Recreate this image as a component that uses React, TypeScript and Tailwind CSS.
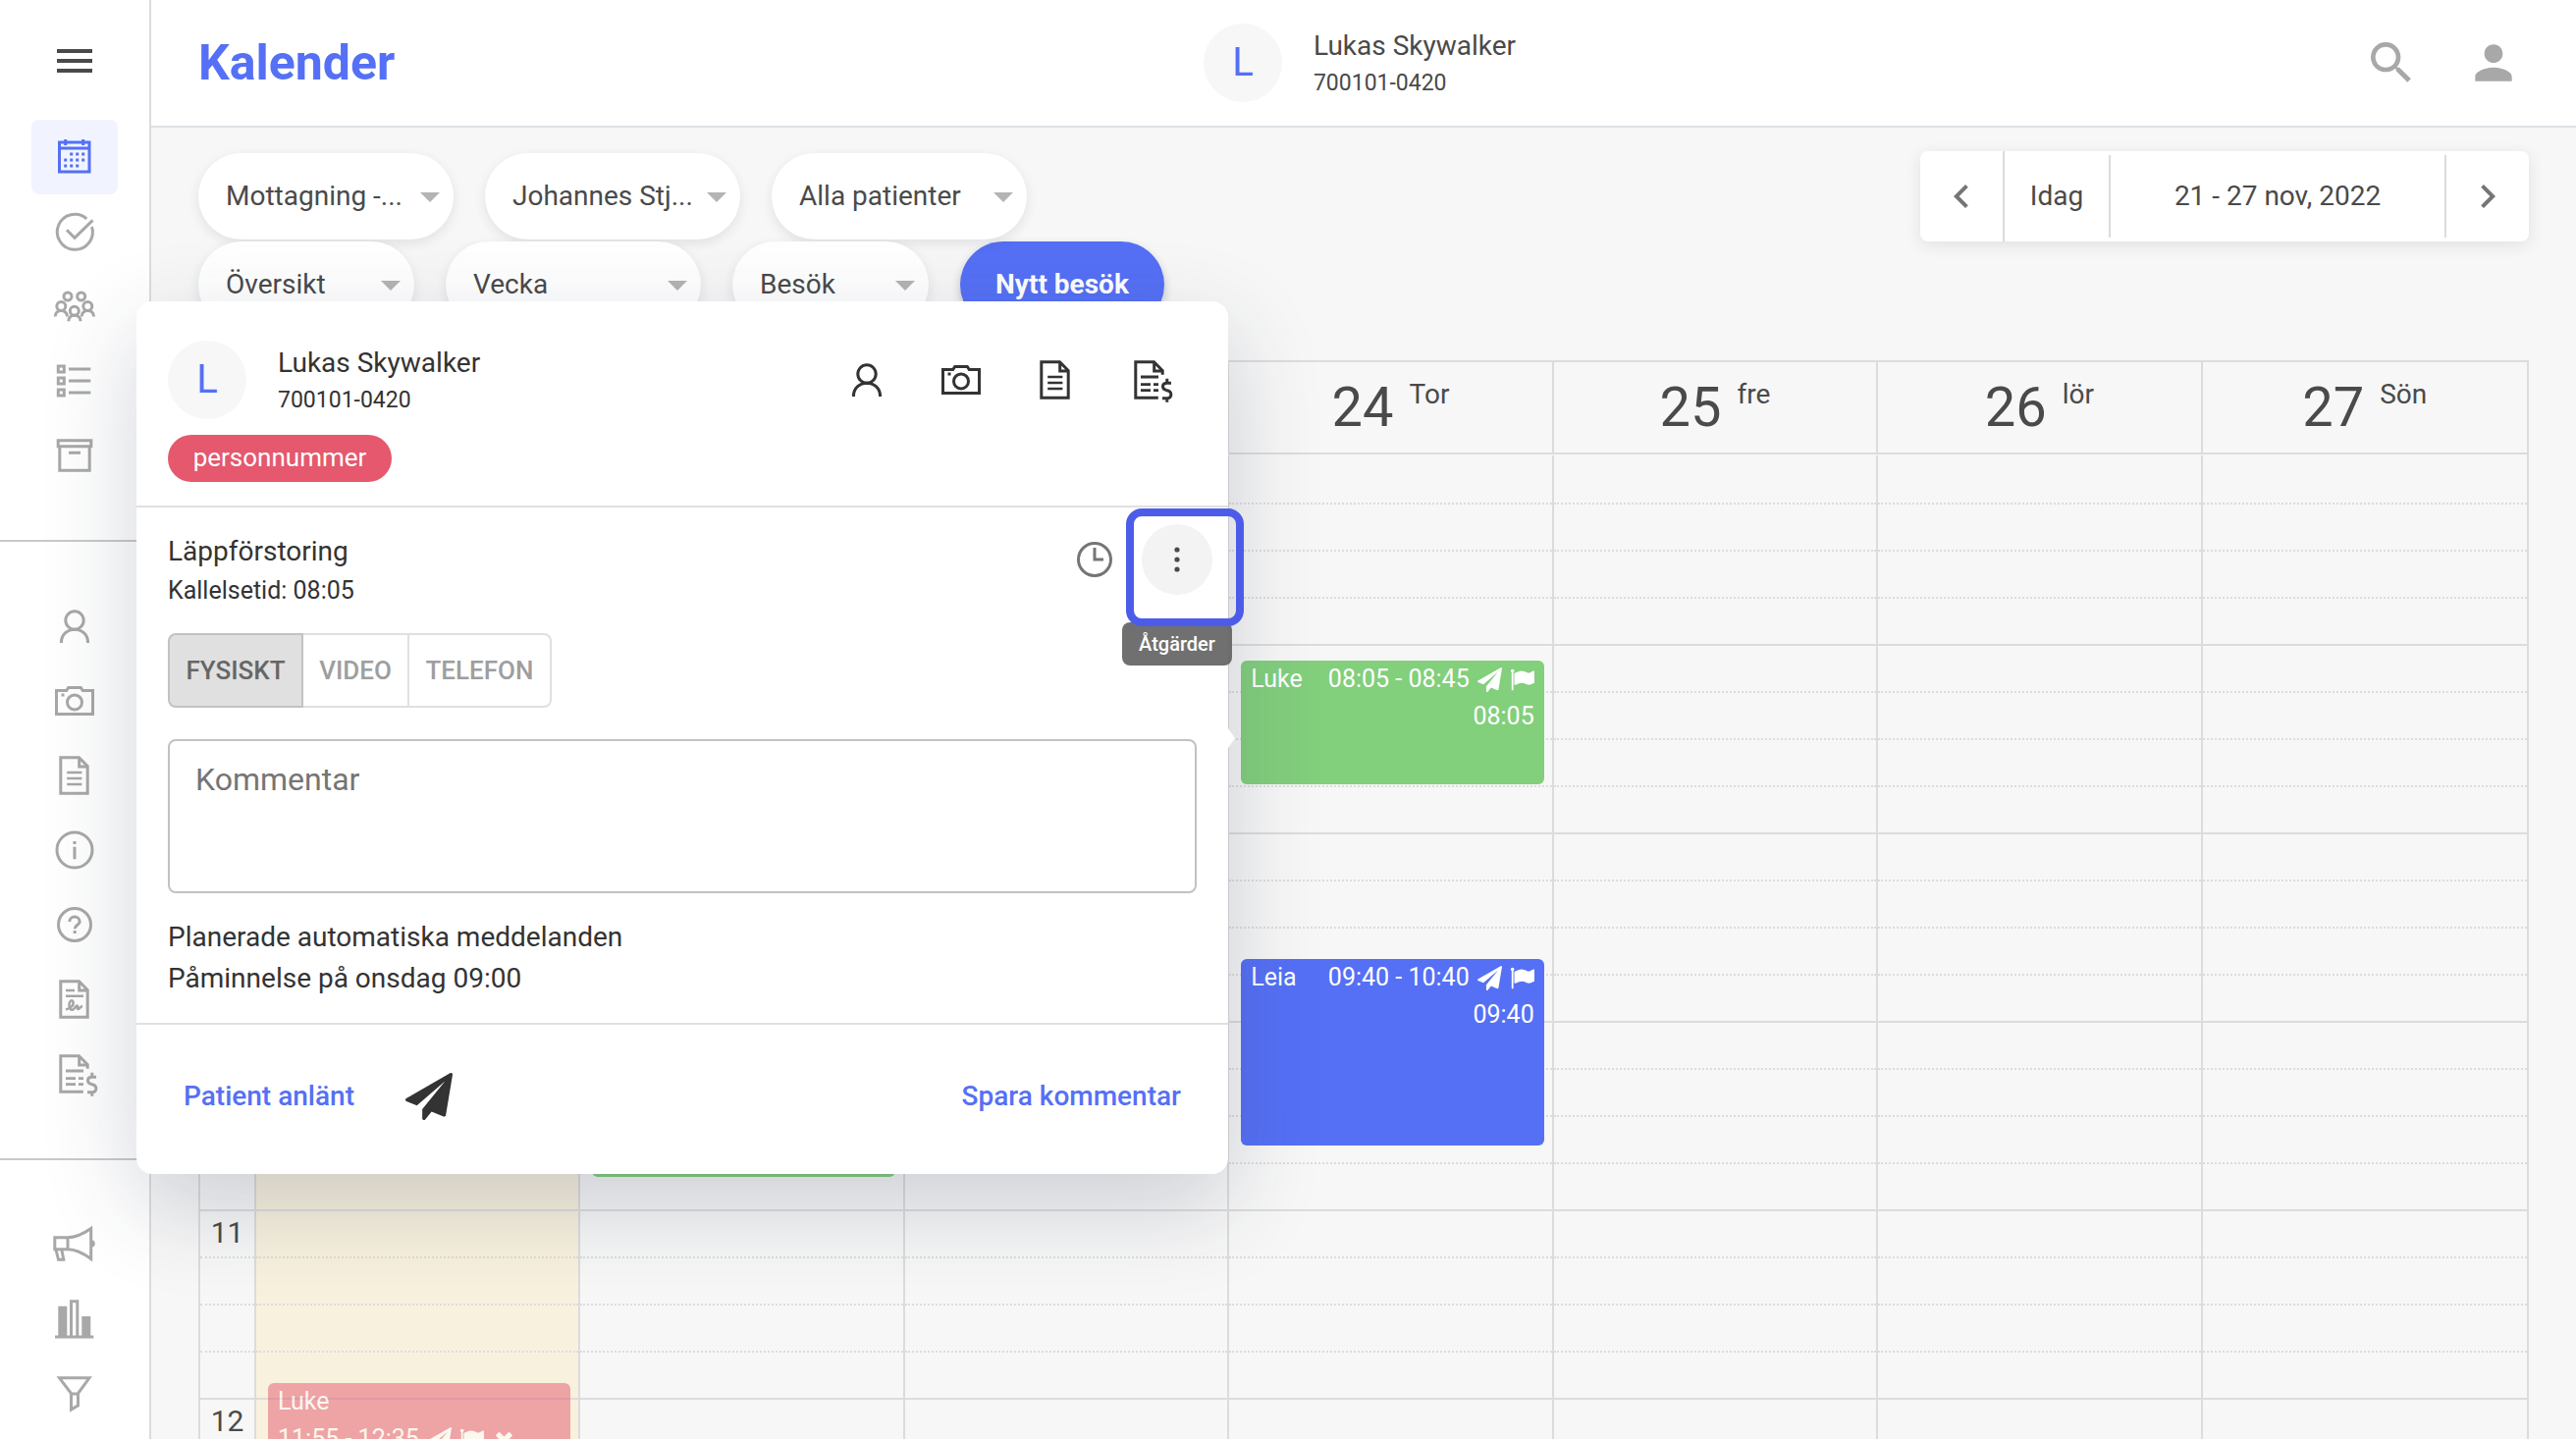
import { useState, type ReactNode } from 'react'
import { MdChevronLeft, MdChevronRight, MdMenu, MdPerson, MdSearch } from 'react-icons/md'
import clsx from 'clsx'

// ---------- Icons ----------

function LineIcon({ children }: { children: ReactNode }) {
    return (
        <svg className="size-12" viewBox="0 0 48 48" fill="none" stroke="currentColor" strokeWidth="3" aria-hidden="true">
            {children}
        </svg>
    )
}

const CalendarIcon = () => (
    <LineIcon>
        <rect x="8.5" y="9" width="30.5" height="30" />
        <path d="M8.5 15H39M14.7 6v6M32.7 6v6" />
        <path d="M19.2 21h3m3 0h3m3 0h3M13.2 27h3m3 0h3m3 0h3m3 0h3M13.2 33h3m3 0h3m3 0h3" />
    </LineIcon>
)

const CheckIcon = () => (
    <LineIcon>
        <path d="M36.3 10.9A18 18 0 1 0 41.5 19" />
        <path d="M16 22.3l8 8L42.5 12.4" />
    </LineIcon>
)

const GroupIcon = () => (
    <LineIcon>
        <circle cx="17" cy="14" r="4" />
        <circle cx="30.7" cy="14" r="4" />
        <circle cx="10.3" cy="24" r="4.5" />
        <circle cx="37.3" cy="24" r="4.5" />
        <circle cx="23.8" cy="28.7" r="4.5" />
        <path d="M4.2 34.5c0-8 12.3-8 12.3 0M31.2 34.5c0-8 12.3-8 12.3 0M17.8 39.2c0-8 12.2-8 12.2 0" />
    </LineIcon>
)

const ListIcon = () => (
    <LineIcon>
        <path d="M7.3 9h6v6h-6zM7.3 21h6v6h-6zM7.3 33h6v6h-6z" />
        <path d="M18 12h22.3M18 24h22.3M18 36h22.3" />
    </LineIcon>
)

const ArchiveIcon = () => (
    <LineIcon>
        <path d="M7.2 8.8h33.6v6H7.2zM8.8 15v24.2h30.4V15M18 21.2h12" />
    </LineIcon>
)

const UserIcon = () => (
    <LineIcon>
        <circle cx="24" cy="18" r="9.2" />
        <path d="M10.4 41c0-18.5 27.2-18.5 27.2 0" />
    </LineIcon>
)

const CameraIcon = () => (
    <LineIcon>
        <path d="M5.5 13.5h10.2l2-3h12.6l2 3h10.2v24h-37z" />
        <circle cx="24" cy="25.4" r="7.5" />
        <path d="M10.5 18h3" />
    </LineIcon>
)

const DocumentIcon = () => (
    <LineIcon>
        <path d="M9.8 5.8h18.7l8.7 8.7v27.7H9.8zM28.7 6v9h9" />
        <path d="M16.2 21h15.2M16.2 27h15.2M16.2 33h15.2" strokeWidth="2.5" />
    </LineIcon>
)

const InfoIcon = () => (
    <LineIcon>
        <circle cx="24" cy="24" r="18" />
        <path d="M24 15v3M24 20.7v12.6" />
    </LineIcon>
)

const HelpIcon = () => (
    <LineIcon>
        <circle cx="24" cy="24" r="16.5" />
        <path d="M18.8 21c0-6.6 10.4-6.6 10.4 0 0 3.5-5 3.2-5 7.3M24.2 30v3" />
    </LineIcon>
)

const ContractIcon = () => (
    <LineIcon>
        <path d="M9.8 5.8h18.7l8.7 8.7v27.7H9.8zM28.7 6v9h9" />
        <path d="M15 15h9M15 20.8h18" strokeWidth="2.5" />
        <path d="M15 34.5c5-1 8.5-4.5 7.500-8-1-2.500-4-1-4 3s1.500 6 4 5c2-1 2.500-4 4-4s-.5 3.500 1 3.500 2-2.500 4.500-3" strokeWidth="2.5" />
    </LineIcon>
)

const InvoiceIcon = () => (
    <LineIcon>
        <path d="M37.2 18.7v-4.2l-8.7-8.7H9.8v36.4h23M28.7 6v9h9" />
        <path d="M15 21h18M15 28.7h10M28 28.7h5M15 34.7h10M28 34.7h5" strokeWidth="2.8" />
        <path d="M46 27.2h-4.5c-5 0-5.5 6.3-.5 7.2 6.5 1 6.5 8.3 0 8.3h-4M41.8 22.7v4.5M41.8 42.5v4.2" />
    </LineIcon>
)

const MegaphoneIcon = () => (
    <LineIcon>
        <path d="M3.8 16.7H17v12H3.8zM17 16.7c9 0 17-4.5 23.7-9.2v31C34 33.5 26 28.7 17 28.7" />
        <path d="M5 29l2.5 10.3h5.3L10.8 29" />
        <path d="M42 20.5a3 3 0 0 1 0 5" />
    </LineIcon>
)

const ChartIcon = () => (
    <LineIcon>
        <path d="M4 42h39.3" />
        <path d="M7.3 10.7h9V41h-9zM31.3 21h9v20h-9z" fill="currentColor" stroke="none" />
        <path d="M20.5 41V5.700h6.300V41" />
    </LineIcon>
)

const FunnelIcon = () => (
    <LineIcon>
        <path d="M8.5 7.8H39L27.5 23.5v12.3L20.5 40V23.5zM20.5 24h7" />
    </LineIcon>
)

function SolidIcon({ d, className }: { d: string; className: string }) {
    return (
        <svg className={className} viewBox="0 0 1792 1792" fill="currentColor" aria-hidden="true">
            <path d={d} />
        </svg>
    )
}

const PLANE =
    'M1764 11q33 24 27 64l-256 1536q-5 29-32 45-14 8-31 8-11 0-24-5l-453-185-242 295q-18 23-49 23-13 0-22-4-19-7-30.5-23.5t-11.5-36.5v-349l864-1059-1069 925-395-162q-37-14-40-55-2-40 32-59l1664-960q15-9 32-9 20 0 36 11z'
const FLAG =
    'M320 256q0 72-64 110v1266q0 13-9.5 22.5t-22.5 9.5h-64q-13 0-22.5-9.5t-9.5-22.5v-1266q-64-38-64-110 0-53 37.5-90.5t90.5-37.5 90.5 37.5 37.5 90.5zm1472 64v763q0 25-12.5 38.5t-39.5 27.5q-215 116-369 116-61 0-123.5-22t-108.5-48-115.5-48-142.5-22q-192 0-464 146-17 9-33 9-26 0-45-19t-19-45v-742q0-32 31-55 21-14 79-43 236-120 421-120 107 0 200 29t219 88q38 19 88 19 54 0 117.5-21t110-47 88-47 54.5-21q26 0 45 19t19 45z'
const CROSS =
    'M1490 1322q0 40-28 68l-136 136q-28 28-68 28t-68-28l-294-294-294 294q-28 28-68 28t-68-28l-136-136q-28-28-28-68t28-68l294-294-294-294q-28-28-28-68t28-68l136-136q28-28 68-28t68 28l294 294 294-294q28-28 68-28t68 28l136 136q28 28 28 68t-28 68l-294 294 294 294q28 28 28 68z'

// ---------- Sidebar ----------

const navGroups = [
    [
        { label: 'Kalender', icon: CalendarIcon, active: true },
        { label: 'Uppgifter', icon: CheckIcon },
        { label: 'Patienter', icon: GroupIcon },
        { label: 'Listor', icon: ListIcon },
        { label: 'Arkiv', icon: ArchiveIcon },
    ],
    [
        { label: 'Profil', icon: UserIcon },
        { label: 'Bilder', icon: CameraIcon },
        { label: 'Journal', icon: DocumentIcon },
        { label: 'Information', icon: InfoIcon },
        { label: 'Hjälp', icon: HelpIcon },
        { label: 'Avtal', icon: ContractIcon },
        { label: 'Fakturor', icon: InvoiceIcon },
    ],
    [
        { label: 'Utskick', icon: MegaphoneIcon },
        { label: 'Statistik', icon: ChartIcon },
        { label: 'Filter', icon: FunnelIcon },
    ],
]

function Sidebar() {
    return (
        <aside className="flex w-[154px] shrink-0 flex-col border-r-2 border-[#dcdcdc] bg-white">
            <button aria-label="Meny" className="flex h-[122px] shrink-0 items-center justify-center pt-0.5 text-[#4a4a4a]">
                <MdMenu className="size-12" />
            </button>
            <nav className="flex flex-col divide-y-2 divide-[#c9c9c9]">
                {navGroups.map((group, i) => (
                    <div key={i} className="flex flex-col items-center py-12 first:pt-0">
                        {group.map((item) => (
                            <a
                                key={item.label}
                                href="#"
                                aria-label={item.label}
                                className={clsx(
                                    'flex h-[76px] w-[88px] items-center justify-center rounded-lg',
                                    item.active ? 'bg-[#f1f4fe] text-[#5570f5]' : 'text-[#a8a8a8]'
                                )}
                            >
                                <item.icon />
                            </a>
                        ))}
                    </div>
                ))}
            </nav>
        </aside>
    )
}

// ---------- Header ----------

function PatientBadge() {
    return (
        <div className="flex items-center gap-8">
            <div className="flex size-20 items-center justify-center rounded-full bg-[#f7f7f7] text-[40px] text-[#5570f5]">L</div>
            <div className="pt-0.5">
                <div className="text-[28px] leading-10">Lukas Skywalker</div>
                <div className="text-[23px] leading-9">700101-0420</div>
            </div>
        </div>
    )
}

function Header() {
    return (
        <header className="grid h-[130px] shrink-0 grid-cols-[1fr_auto_1fr] items-center border-b-2 border-[#dee2e6] bg-white pr-14 pl-12">
            <h1 className="text-[50px] leading-none font-bold text-[#5570f5]">Kalender</h1>
            <PatientBadge />
            <div className="flex justify-end gap-12 text-[#a8a8a8]">
                <button aria-label="Sök">
                    <MdSearch className="size-14" />
                </button>
                <button aria-label="Konto">
                    <MdPerson className="size-14" />
                </button>
            </div>
        </header>
    )
}

// ---------- Toolbar ----------

function PillSelect({ label, value, width }: { label: string; value: string; width: string }) {
    return (
        <div className={clsx('relative h-[88px]', width)}>
            <select
                aria-label={label}
                className="size-full appearance-none rounded-full bg-white pr-10 pl-7 shadow-[0_4px_12px_rgba(33,43,73,0.1)] outline-none"
            >
                <option>{value}</option>
            </select>
            <svg className="pointer-events-none absolute top-10 right-3.5 h-2.5 w-5 text-[#b4b4b4]" viewBox="0 0 20 10" aria-hidden="true">
                <path d="M0 0h20L10 10z" fill="currentColor" />
            </svg>
        </div>
    )
}

function Toolbar() {
    return (
        <div className="flex items-start justify-between">
            <div className="flex flex-col gap-0.5 pt-0.5">
                <div className="flex gap-8">
                    <PillSelect label="Mottagning" value="Mottagning -..." width="w-[260px]" />
                    <PillSelect label="Behandlare" value="Johannes Stj..." width="w-[260px]" />
                    <PillSelect label="Patienter" value="Alla patienter" width="w-[260px]" />
                </div>
                <div className="flex gap-8">
                    <PillSelect label="Vy" value="Översikt" width="w-[220px]" />
                    <PillSelect label="Period" value="Vecka" width="w-[260px]" />
                    <PillSelect label="Typ" value="Besök" width="w-[200px]" />
                    <button className="h-[88px] w-[208px] rounded-full bg-[#5570f5] font-bold text-white shadow-[0_4px_8px_rgba(33,43,73,0.25)]">
                        Nytt besök
                    </button>
                </div>
            </div>
            <div className="flex h-[92px] items-center rounded-lg bg-white shadow-[0_4px_16px_rgba(33,43,73,0.1)]">
                <button aria-label="Föregående vecka" className="flex h-full w-[86px] items-center justify-center border-r-2 border-[#dcdcdc] text-[#757575]">
                    <MdChevronLeft className="size-12" />
                </button>
                <button className="h-[84px] w-[108px] border-r-2 border-[#dcdcdc]">Idag</button>
                <button className="h-[84px] w-[342px] border-r-2 border-[#dcdcdc]">21 - 27 nov, 2022</button>
                <button aria-label="Nästa vecka" className="flex h-full w-[84px] items-center justify-center text-[#757575]">
                    <MdChevronRight className="size-12" />
                </button>
            </div>
        </div>
    )
}

// ---------- Calendar ----------

type Visit = {
    name: string
    start: string
    end: string
    color: string
    summon?: string
    cancelled?: boolean
}

const days: { date: number; name: string; today?: boolean; visits: Visit[] }[] = [
    { date: 21, name: 'Mån', today: true, visits: [{ name: 'Luke', start: '11:55', end: '12:35', color: 'bg-[#e6586e]', cancelled: true }] },
    { date: 22, name: 'Tis', visits: [{ name: 'Leia', start: '10:10', end: '10:50', color: 'bg-[#82cf7c]' }] },
    { date: 23, name: 'Ons', visits: [] },
    {
        date: 24,
        name: 'Tor',
        visits: [
            { name: 'Luke', start: '08:05', end: '08:45', color: 'bg-[#82cf7c]', summon: '08:05' },
            { name: 'Leia', start: '09:40', end: '10:40', color: 'bg-[#5570f5]', summon: '09:40' },
        ],
    },
    { date: 25, name: 'fre', visits: [] },
    { date: 26, name: 'lör', visits: [] },
    { date: 27, name: 'Sön', visits: [] },
]

const FIRST_HOUR = 7
const PX_PER_MINUTE = 3.2
const hours = [7, 8, 9, 10, 11, 12]

const minutesFromStart = (time: string) => {
    const [h, m] = time.split(':').map(Number)
    return (h - FIRST_HOUR) * 60 + m
}

function HourSlots({ hour, label }: { hour: number; label?: boolean }) {
    return (
        <>
            {[0, 15, 30, 45].map((minute) => (
                <div
                    key={minute}
                    className={clsx(
                        'h-12 border-t-2 border-[#dcdcdc] text-center text-[30px] leading-11',
                        minute > 0 && 'border-dotted',
                        minute === 0 && hour === FIRST_HOUR && 'border-transparent'
                    )}
                >
                    {label && minute === 0 ? String(hour).padStart(2, '0') : null}
                </div>
            ))}
        </>
    )
}

function VisitCard({ visit }: { visit: Visit }) {
    const top = minutesFromStart(visit.start) * PX_PER_MINUTE + 1
    const height = (minutesFromStart(visit.end) - minutesFromStart(visit.start)) * PX_PER_MINUTE - 2

    return (
        <div
            className={clsx(
                'absolute right-2 left-3 overflow-hidden rounded-md px-2.5 text-[25px] leading-[38px] text-white',
                visit.color,
                visit.cancelled && 'opacity-50'
            )}
            style={{ top, height }}
        >
            <div className={clsx('flex justify-between', visit.cancelled && 'flex-col')}>
                <span>{visit.name}</span>
                <span className="flex items-center gap-2">
                    {visit.start} - {visit.end}
                    <SolidIcon d={PLANE} className="size-[25px]" />
                    <SolidIcon d={FLAG} className="size-[25px]" />
                    {visit.cancelled && <SolidIcon d={CROSS} className="size-[25px]" />}
                </span>
            </div>
            {visit.summon && <div className="text-right">{visit.summon}</div>}
        </div>
    )
}

function WeekCalendar() {
    return (
        <div className="mt-[33px] border-2 border-[#dcdcdc]">
            <div className="flex border-b-2 border-[#dcdcdc]">
                <div className="w-[57px] shrink-0 border-r-2 border-[#dcdcdc]" />
                <div className="grid flex-1 grid-cols-7">
                    {days.map((day) => (
                        <div key={day.date} className="flex h-[92px] justify-center gap-4 border-r-2 border-[#dcdcdc] pt-3.5 last:border-r-0">
                            <span className="text-[56px] leading-16">{day.date}</span>
                            <span className="leading-[38px]">{day.name}</span>
                        </div>
                    ))}
                </div>
            </div>
            <div className="mt-px flex">
                <div className="w-[57px] shrink-0 border-r-2 border-[#dcdcdc]">
                    {hours.map((hour) => (
                        <HourSlots key={hour} hour={hour} label />
                    ))}
                </div>
                <div className="grid flex-1 grid-cols-7">
                    {days.map((day) => (
                        <div
                            key={day.date}
                            className={clsx('relative border-r-2 border-[#dcdcdc] last:border-r-0', day.today && 'bg-[#f8f1de]')}
                        >
                            {hours.map((hour) => (
                                <HourSlots key={hour} hour={hour} />
                            ))}
                            {day.visits.map((visit) => (
                                <VisitCard key={visit.start} visit={visit} />
                            ))}
                        </div>
                    ))}
                </div>
            </div>
        </div>
    )
}

// ---------- Visit popover ----------

const shortcuts = [
    { label: 'Patientkort', icon: UserIcon },
    { label: 'Bilder', icon: CameraIcon },
    { label: 'Journal', icon: DocumentIcon },
    { label: 'Faktura', icon: InvoiceIcon },
]

const visitTypes = [
    { label: 'FYSISKT', width: 'w-[138px]' },
    { label: 'VIDEO', width: 'w-[108px]' },
    { label: 'TELEFON', width: 'w-[145px]' },
]

function VisitPopover() {
    const [visitType, setVisitType] = useState('FYSISKT')
    const [comment, setComment] = useState('')

    return (
        <section
            aria-label="Besök"
            className="absolute top-[307px] left-[139px] z-10 w-[1112px] rounded-2xl bg-white text-[#333333] shadow-[0_32px_96px_rgba(33,43,73,0.2)]"
        >
            {/* Arrow pointing at the visit */}
            <svg className="absolute top-[435px] left-full h-5 w-[7px] text-white" viewBox="0 0 7 20" aria-hidden="true">
                <path d="M0 0l7 10-7 10z" fill="currentColor" />
            </svg>

            <div className="border-b-2 border-[#e0e0e0] px-8 pt-10 pb-6">
                <div className="flex items-center justify-between">
                    <PatientBadge />
                    <div className="flex">
                        {shortcuts.map((item) => (
                            <button key={item.label} aria-label={item.label} className="flex h-20 w-24 items-center justify-center">
                                <item.icon />
                            </button>
                        ))}
                    </div>
                </div>
                <span className="mt-4 flex h-12 w-[228px] items-center justify-center rounded-full bg-[#e5586d] pb-0.5 text-[26px] text-white">
                    personnummer
                </span>
            </div>

            <div className="border-b-2 border-[#e0e0e0] px-8 py-6">
                <div className="flex justify-between">
                    <div>
                        <h2 className="leading-[42px]">Läppförstoring</h2>
                        <p className="text-[25px] leading-[38px]">Kallelsetid: 08:05</p>
                    </div>
                    <div className="-mr-4 flex h-[58px] items-center gap-6">
                        <svg className="size-12 text-[#757575]" viewBox="0 0 48 48" fill="none" stroke="currentColor" strokeWidth="3" aria-hidden="true">
                            <circle cx="24" cy="24" r="16.5" />
                            <path d="M24 12v12h9" />
                        </svg>
                        <div className="relative">
                            <button
                                aria-label="Åtgärder"
                                className="flex size-[72px] items-center justify-center rounded-full bg-[#f3f3f3] text-[#4a4a4a]"
                            >
                                <svg className="size-10" viewBox="0 0 40 40" fill="currentColor" aria-hidden="true">
                                    <circle cx="20" cy="10" r="2.6" />
                                    <circle cx="20" cy="20" r="2.6" />
                                    <circle cx="20" cy="30" r="2.6" />
                                </svg>
                            </button>
                            <div
                                role="tooltip"
                                className="absolute top-[100px] left-1/2 flex h-11 w-28 -translate-x-1/2 items-center justify-center rounded-lg bg-[#616161]/90 text-xl font-medium text-white"
                            >
                                Åtgärder
                            </div>
                            <div className="pointer-events-none absolute -top-4 -left-4 size-[120px] rounded-2xl border-8 border-[#4d5ce8]" />
                        </div>
                    </div>
                </div>

                <div className="mt-6 flex">
                    {visitTypes.map((type) => (
                        <button
                            key={type.label}
                            aria-pressed={visitType === type.label}
                            onClick={() => setVisitType(type.label)}
                            className={clsx(
                                'h-[76px] border-2 border-l-0 text-[26px] font-medium first:rounded-l-lg first:border-l-2 last:rounded-r-lg',
                                type.width,
                                visitType === type.label
                                    ? 'border-[#c2c2c2] bg-[#e0e0e0] text-[#666666]'
                                    : 'border-[#e0e0e0] text-[#9e9e9e]'
                            )}
                        >
                            {type.label}
                        </button>
                    ))}
                </div>

                <textarea
                    aria-label="Kommentar"
                    placeholder="Kommentar"
                    value={comment}
                    onChange={(e) => setComment(e.target.value)}
                    className="mt-8 block h-[157px] w-full resize-none rounded-lg border-2 border-[#c2c2c2] px-[26px] py-4 text-[32px] leading-[46px] outline-none placeholder:text-[#757575]"
                />

                <div className="mt-6 leading-[42px]">
                    <p>Planerade automatiska meddelanden</p>
                    <p>Påminnelse på onsdag 09:00</p>
                </div>
            </div>

            <div className="flex h-[152px] items-center justify-between px-12 pb-1.5">
                <div className="flex items-center gap-[52px]">
                    <button className="font-medium text-[#5570f5]">Patient anlänt</button>
                    <button aria-label="Skicka påminnelse">
                        <SolidIcon d={PLANE} className="size-12" />
                    </button>
                </div>
                <button className="font-medium text-[#5570f5]">Spara kommentar</button>
            </div>
        </section>
    )
}

export default function App() {
    return (
        <div className="relative flex h-screen overflow-hidden bg-[#f7f7f7] font-['Roboto',sans-serif] text-[28px] text-[#4a4a4a]">
            <Sidebar />
            <div className="flex min-w-0 flex-1 flex-col">
                <Header />
                <main className="min-h-0 flex-1 overflow-hidden px-12 pt-6">
                    <Toolbar />
                    <WeekCalendar />
                </main>
            </div>
            <VisitPopover />
        </div>
    )
}
